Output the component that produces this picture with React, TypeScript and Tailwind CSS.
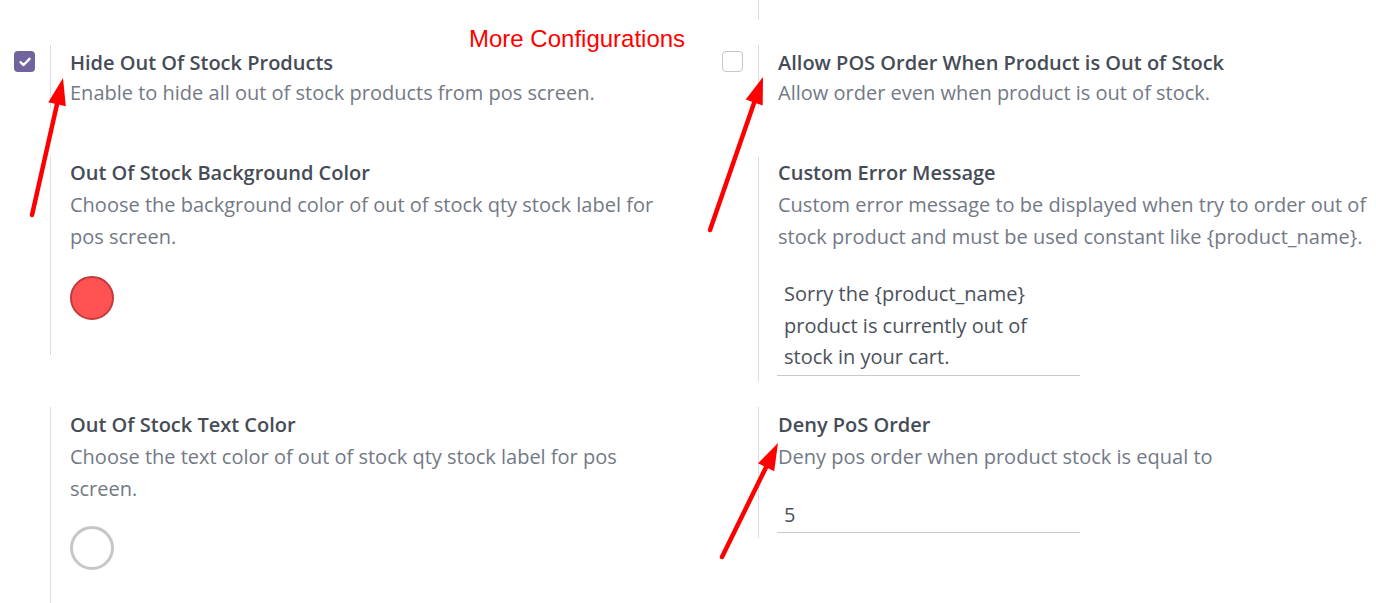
import type { ReactNode } from "react";

const Checkbox = ({ checked }: { checked?: boolean }) =>
  checked ? (
    <span className="flex h-[21px] w-[21px] items-center justify-center rounded-[4px] bg-[#71639e]">
      <svg width="12" height="10" viewBox="0 0 12 10" fill="none">
        <path d="M1.5 5.2 4.6 8 10.5 1.8" stroke="white" strokeWidth="2.4" strokeLinecap="round" strokeLinejoin="round" />
      </svg>
    </span>
  ) : (
    <span className="block h-[21px] w-[21px] rounded-[4px] border border-[#c4c6cc] bg-white" />
  );

type BoxProps = {
  title: string;
  desc: string;
  checkbox?: "on" | "off";
  children?: ReactNode;
  paneClass?: string;
  titleClass?: string;
  descClass?: string;
};

const SettingBox = ({
  title,
  desc,
  checkbox,
  children,
  paneClass = "",
  titleClass = "leading-[32px]",
  descClass = "leading-[32px]",
}: BoxProps) => (
  <div className="flex">
    <div className="w-[50px] shrink-0 pl-[14px] pt-[6px]">
      {checkbox && <Checkbox checked={checkbox === "on"} />}
    </div>
    <div className={`flex-1 border-l border-[#dcdde3] pl-[19px] ${paneClass}`}>
      <div className={`text-[20px] font-semibold text-[#464c56] ${titleClass}`}>{title}</div>
      <div className={`text-[20px] text-[#737985] ${descClass}`}>{desc}</div>
      {children}
    </div>
  </div>
);

const Underlined = ({ children, className = "" }: { children: ReactNode; className?: string }) => (
  <div
    className={`-ml-px w-[303px] border-b border-[#cacaca] px-[7px] text-[20px] leading-[31.5px] text-[#4b515b] ${className}`}
  >
    {children}
  </div>
);

export default function App() {
  return (
    <div className="relative h-[603px] w-[1376px] overflow-hidden bg-white font-['Open_Sans',sans-serif]">
      {/* end of the box above */}
      <div className="grid grid-cols-[708px_1fr]">
        <div />
        <div className="ml-[50px] h-5 border-l border-[#dcdde3]" />
      </div>

      {/* row 1 */}
      <div className="mt-[25px] grid grid-cols-[708px_1fr] items-start">
        <SettingBox
          checkbox="on"
          title="Hide Out Of Stock Products"
          desc="Enable to hide all out of stock products from pos screen."
          paneClass="pt-[2px]"
          titleClass="leading-[31px]"
          descClass="leading-[30px]"
        />
        <SettingBox
          checkbox="off"
          title="Allow POS Order When Product is Out of Stock"
          desc="Allow order even when product is out of stock."
          paneClass="pt-[2px]"
          titleClass="leading-[31px]"
          descClass="leading-[30px]"
        />
      </div>

      {/* row 2 */}
      <div className="mt-[49px] grid grid-cols-[708px_1fr] items-start">
        <SettingBox
          title="Out Of Stock Background Color"
          desc="Choose the background color of out of stock qty stock label for pos screen."
          paneClass="pr-[30px] pb-[35px]"
        >
          <div className="mt-[23px] h-[44px] w-[44px] rounded-full border-[2.5px] border-[#c2393c] bg-[#ff5252]" />
        </SettingBox>
        <SettingBox
          title="Custom Error Message"
          desc="Custom error message to be displayed when try to order out of stock product and must be used constant like {product_name}."
          paneClass="pb-[6px]"
        >
          <div className="mt-[25px]">
            <Underlined className="pb-[2px]">
              Sorry the {"{product_name}"} product is currently out of stock in your cart.
            </Underlined>
          </div>
        </SettingBox>
      </div>

      {/* row 3 */}
      <div className="mt-[25px] grid grid-cols-[708px_1fr] items-start">
        <SettingBox
          title="Out Of Stock Text Color"
          desc="Choose the text color of out of stock qty stock label for pos screen."
          paneClass="pt-[2px] pr-[30px] pb-[40px]"
        >
          <div className="mt-[21px] h-[44px] w-[44px] rounded-full border-[3px] border-[#c6c6c6] bg-white" />
        </SettingBox>
        <SettingBox
          title="Deny PoS Order"
          desc="Deny pos order when product stock is equal to"
          paneClass="pt-[2px] pb-[5px]"
        >
          <div className="mt-[26px]">
            <Underlined className="pb-[2px]">5</Underlined>
          </div>
        </SettingBox>
      </div>

      {/* annotations */}
      <div className="absolute left-[469px] top-[25px] font-['Liberation_Sans',Arial,sans-serif] text-[24px] leading-[28px] text-[#ff0000]">
        More Configurations
      </div>
      <svg className="pointer-events-none absolute inset-0" width="1376" height="603" viewBox="0 0 1376 603">
        <g stroke="#ff0000" strokeWidth="4.5" strokeLinecap="round">
          <line x1="32" y1="215" x2="57" y2="104.3" />
          <line x1="710" y1="230" x2="754.2" y2="102.5" />
          <line x1="722" y1="557" x2="766.1" y2="467.2" />
        </g>
        <g fill="#ff0000">
          <polygon points="63,78 65.8,106.3 48.3,102.3" />
          <polygon points="763,77 762.7,105.4 745.7,99.6" />
          <polygon points="778,443 774.2,471.2 758,463.2" />
        </g>
      </svg>
    </div>
  );
}
